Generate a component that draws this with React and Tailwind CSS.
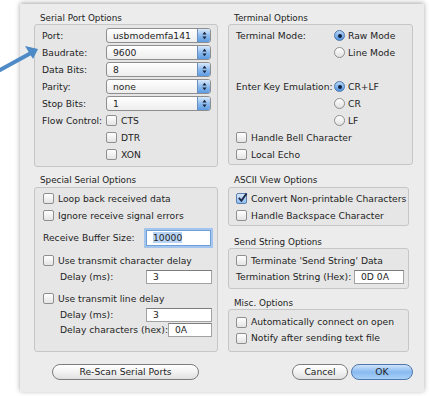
import React from "react";

const font = { fontFamily: '"DejaVu Sans", "Liberation Sans", sans-serif' };

function Box({ className, children }) {
  return (
    <div className={"rounded-[3px] border border-[#c6c6c6] bg-[#e6e6e6] " + className}>
      {children}
    </div>
  );
}

function Title({ className = "", children }) {
  return (
    <div className={"h-[12px] leading-[12px] pl-[6px] text-[8.8px] text-[#222] " + className}>{children}</div>
  );
}

function Check({ checked }) {
  return (
    <span
      className={
        "relative inline-block w-[11px] h-[11px] shrink-0 rounded-[2px] border " +
        (checked
          ? "border-[#5b7fae] bg-gradient-to-b from-[#d6e7fa] to-[#8fbdf0]"
          : "border-[#8f8f8f] bg-gradient-to-b from-white to-[#e4e4e4]")
      }
    >
      {checked && (
        <svg viewBox="0 0 12 12" className="absolute left-[0px] top-[-2px] w-[11px] h-[11px]">
          <path d="M2 6.5 L4.8 9.5 L10.5 1.5" fill="none" stroke="#1c2a4a" strokeWidth="2" />
        </svg>
      )}
    </span>
  );
}

function Radio({ on }) {
  return (
    <span
      className={
        "inline-flex items-center justify-center w-[11px] h-[11px] shrink-0 rounded-full border " +
        (on
          ? "border-[#4f77ab] bg-gradient-to-b from-[#b7d6f7] to-[#4d92e0]"
          : "border-[#8f8f8f] bg-gradient-to-b from-white to-[#e2e2e2]")
      }
    >
      {on && <span className="w-[4px] h-[4px] rounded-full bg-[#10203a]" />}
    </span>
  );
}

function CheckRow({ label, checked, className = "" }) {
  return (
    <div className={"flex items-center gap-[4px] " + className}>
      <Check checked={checked} />
      <span>{label}</span>
    </div>
  );
}

function Select({ value }) {
  return (
    <div className="flex h-[15px] w-[105px] rounded-[3px] border border-[#8e8e8e] bg-gradient-to-b from-white to-[#ededed] overflow-hidden">
      <span className="flex-1 pl-[6px] leading-[13px]">{value}</span>
      <span className="flex flex-col items-center justify-center w-[13px] border-l border-[#6d8fbd] bg-gradient-to-b from-[#d9e9fb] via-[#8dbbee] to-[#5c9be3]">
        <svg viewBox="0 0 6 10" className="w-[5px] h-[9px]">
          <path d="M3 0.5 L5.5 3.8 H0.5 Z M3 9.5 L5.5 6.2 H0.5 Z" fill="#1b2436" />
        </svg>
      </span>
    </div>
  );
}

function Input({ value, className = "", focus }) {
  return (
    <div
      className={
        "h-[14px] border bg-white pl-[6px] leading-[12px] " +
        (focus
          ? "border-[#6e9fd6] shadow-[0_0_0_2px_#a4c6ee]"
          : "border-[#a2a2a2] border-t-[#7d7d7d]") +
        " " +
        className
      }
    >
      {focus ? <span className="bg-[#b8d4f4]">{value}</span> : value}
    </div>
  );
}

function Button({ children, className = "", primary }) {
  return (
    <div
      className={
        "h-[16px] rounded-full border flex items-center justify-center leading-none " +
        (primary
          ? "border-[#4f77ab] bg-gradient-to-b from-[#cfe3fa] via-[#88baf0] to-[#a9d0f7]"
          : "border-[#7d7d7d] bg-gradient-to-b from-white via-[#f2f2f2] to-[#e0e0e0]") +
        " " +
        className
      }
    >
      {children}
    </div>
  );
}

export default function App() {
  const serialRows = [
    ["Port:", "usbmodemfa141"],
    ["Baudrate:", "9600"],
    ["Data Bits:", "8"],
    ["Parity:", "none"],
    ["Stop Bits:", "1"],
  ];

  return (
    <div className="relative w-[430px] h-[396px] bg-white text-[9.2px] text-[#1e1e1e]" style={font}>
      <div className="ml-[20px] pt-[4px]">
        <div className="w-[404px] h-[388px] bg-[#ececec] shadow-[0_-1px_5px_rgba(0,0,0,0.35)] pt-[8px] pl-[14px]">
          <div className="flex gap-[10px]">
            {/* left column */}
            <div className="w-[184px] flex flex-col">
              <Title>Serial Port Options</Title>
              <Box className="h-[143px] pt-[2px] pl-[7px]">
                {serialRows.map(([label, value]) => (
                  <div key={label} className="h-[17px] flex items-center">
                    <span className="w-[64px]">{label}</span>
                    <Select value={value} />
                  </div>
                ))}
                <div className="h-[17px] flex items-center">
                  <span className="w-[64px]">Flow Control:</span>
                  <CheckRow label="CTS" />
                </div>
                <div className="h-[17px] flex items-center pl-[64px]">
                  <CheckRow label="DTR" />
                </div>
                <div className="h-[17px] flex items-center pl-[64px]">
                  <CheckRow label="XON" />
                </div>
              </Box>

              <Title className="mt-[7px] mb-[1px]">Special Serial Options</Title>
              <Box className="h-[165px] pt-[2px] pl-[8px]">
                <CheckRow label="Loop back received data" className="h-[17px]" />
                <CheckRow label="Ignore receive signal errors" className="h-[17px]" />
                <div className="mt-[5px] h-[17px] flex items-center">
                  <span className="w-[103px]">Receive Buffer Size:</span>
                  <Input value="10000" focus className="w-[65px] h-[16px] leading-[14px]" />
                </div>
                <CheckRow label="Use transmit character delay" className="mt-[6px] h-[17px]" />
                <div className="h-[15px] flex items-center">
                  <span className="w-[103px] pl-[17px]">Delay (ms):</span>
                  <Input value="3" className="w-[66px]" />
                </div>
                <CheckRow label="Use transmit line delay" className="mt-[6px] h-[17px]" />
                <div className="h-[15px] flex items-center">
                  <span className="w-[103px] pl-[17px]">Delay (ms):</span>
                  <Input value="3" className="w-[66px]" />
                </div>
                <div className="h-[16px] flex items-center">
                  <span className="w-[125px] pl-[17px] whitespace-nowrap">Delay characters (hex):</span>
                  <Input value="0A" className="w-[44px]" />
                </div>
              </Box>
            </div>

            {/* right column */}
            <div className="w-[185px] flex flex-col">
              <Title>Terminal Options</Title>
              <Box className="h-[141px] pt-[2px] pl-[7px]">
                <div className="h-[17px] flex items-center">
                  <span className="w-[98px]">Terminal Mode:</span>
                  <Radio on />
                  <span className="ml-[3px]">Raw Mode</span>
                </div>
                <div className="h-[17px] flex items-center pl-[98px]">
                  <Radio />
                  <span className="ml-[3px]">Line Mode</span>
                </div>
                <div className="h-[17px]" />
                <div className="h-[17px] flex items-center">
                  <span className="w-[98px] whitespace-nowrap">Enter Key Emulation:</span>
                  <Radio on />
                  <span className="ml-[3px]">CR+LF</span>
                </div>
                <div className="h-[17px] flex items-center pl-[98px]">
                  <Radio />
                  <span className="ml-[3px]">CR</span>
                </div>
                <div className="h-[17px] flex items-center pl-[98px]">
                  <Radio />
                  <span className="ml-[3px]">LF</span>
                </div>
                <CheckRow label="Handle Bell Character" className="h-[17px]" />
                <CheckRow label="Local Echo" className="h-[17px]" />
              </Box>

              <Title className="mt-[9px] mb-[1px]">ASCII View Options</Title>
              <Box className="w-[181px] h-[39px] pt-[2px] pl-[7px]">
                <CheckRow label="Convert Non-printable Characters" checked className="h-[17px] whitespace-nowrap" />
                <CheckRow label="Handle Backspace Character" className="h-[17px]" />
              </Box>

              <Title className="mt-[10px]">Send String Options</Title>
              <Box className="w-[181px] h-[41px] pt-[3px] pl-[7px]">
                <CheckRow label="Terminate 'Send String' Data" className="h-[17px]" />
                <div className="h-[15px] flex items-center">
                  <span className="w-[118px] whitespace-nowrap">Termination String (Hex):</span>
                  <Input value="0D 0A" className="w-[50px]" />
                </div>
              </Box>

              <Title className="mt-[8px]">Misc. Options</Title>
              <Box className="w-[181px] h-[43px] pt-[4px] pl-[7px]">
                <CheckRow label="Automatically connect on open" className="h-[16px]" />
                <CheckRow label="Notify after sending text file" className="h-[16px]" />
              </Box>
            </div>
          </div>

          <div className="mt-[12px] flex items-center">
            <Button className="ml-[18px] w-[147px]">Re-Scan Serial Ports</Button>
            <Button className="ml-[93px] w-[56px]">Cancel</Button>
            <Button primary className="ml-[3px] w-[62px]">OK</Button>
          </div>
        </div>
      </div>

      {/* annotation arrow */}
      <svg className="absolute left-0 top-0 w-[50px] h-[80px]" viewBox="0 0 50 80">
        <path d="M-2 71 L31 53" stroke="#4d8ac6" strokeWidth="4" fill="none" strokeLinecap="round" />
        <path d="M38 49 L25 46 L33 59 Z" fill="#4d8ac6" />
      </svg>
    </div>
  );
}
